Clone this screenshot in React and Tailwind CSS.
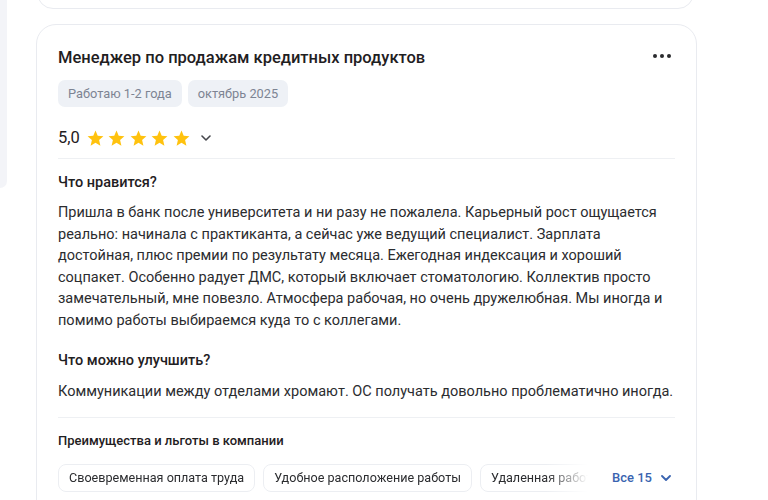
import React from "react";

const benefits = [
  "Своевременная оплата труда",
  "Удобное расположение работы",
  "Удаленная работа",
];

const StarIcon = () => (
  <svg viewBox="0 0 24 24" className="h-[19px] w-[19px]" fill="#ffc20e">
    <path d="M12 17.27L18.18 21l-1.64-7.03L22 9.24l-7.19-.61L12 2 9.19 8.63 2 9.24l5.46 4.73L5.82 21z" />
  </svg>
);

const App = () => {
  return (
    <div className="flex h-[500px] items-start overflow-hidden bg-white font-['Roboto','Liberation_Sans',sans-serif] text-[#222325]">
      {/* left column edge */}
      <div className="w-[7px] shrink-0">
        <div className="h-[188px] rounded-br-[14px] bg-[#f3f4f8]" />
      </div>

      <div className="ml-[29px] w-[661px] shrink-0">
        {/* previous card, mostly scrolled away */}
        <div className="mt-[-31px] ml-px h-[40px] w-[657px] rounded-[16px] border border-[#e9ebf0]" />

        <div className="mt-[15px] rounded-[20px] border border-[#e9ebf0] px-[21px] pt-[21px]">
          <div className="flex items-center justify-between">
            <h2 className="text-[16.5px] leading-6 font-medium text-[#1f2022]">
              Менеджер по продажам кредитных продуктов
            </h2>
            <svg viewBox="0 0 18 4" className="mr-[4px] mt-[-4px] h-[4px] w-[18px]" fill="#2a2b2e">
              <circle cx="2" cy="2" r="2" />
              <circle cx="9" cy="2" r="2" />
              <circle cx="16" cy="2" r="2" />
            </svg>
          </div>

          <div className="mt-[10px] flex gap-[6px]">
            <span className="rounded-[7px] bg-[#eef1f6] px-[10px] py-[5px] text-[12.8px] leading-[17px] text-[#7d8493]">
              Работаю 1-2 года
            </span>
            <span className="rounded-[7px] bg-[#eef1f6] px-[10px] py-[5px] text-[12.8px] leading-[17px] text-[#7d8493]">
              октябрь 2025
            </span>
          </div>

          <div className="mt-[19px] flex h-6 items-center">
            <span className="text-[16.5px] leading-6 text-[#1f2022]">5,0</span>
            <div className="ml-[6px] flex gap-[2.5px]">
              <StarIcon />
              <StarIcon />
              <StarIcon />
              <StarIcon />
              <StarIcon />
            </div>
            <svg viewBox="0 0 10 6" className="ml-[10px] h-[6px] w-[10px]" fill="none" stroke="#45474c" strokeWidth="1.6" strokeLinecap="round" strokeLinejoin="round">
              <path d="M1 1l4 4 4-4" />
            </svg>
          </div>

          <div className="mt-[8px] h-px bg-[#eef0f3]" />

          <h3 className="mt-[14px] text-[14.5px] leading-5 font-medium text-[#1f2022]">Что нравится?</h3>
          <p className="mt-[9px] text-[14.5px] leading-[21.6px] text-[#2b2c2f]">
            Пришла в банк после университета и ни разу не пожалела. Карьерный рост ощущается
            реально: начинала с практиканта, а сейчас уже ведущий специалист. Зарплата
            достойная, плюс премии по результату месяца. Ежегодная индексация и хороший
            соцпакет. Особенно радует ДМС, который включает стоматологию. Коллектив просто
            замечательный, мне повезло. Атмосфера рабочая, но очень дружелюбная. Мы иногда и
            помимо работы выбираемся куда то с коллегами.
          </p>

          <h3 className="mt-[19px] text-[14.5px] leading-5 font-medium text-[#1f2022]">Что можно улучшить?</h3>
          <p className="mt-[10px] text-[14.5px] leading-[22px] text-[#2b2c2f]">
            Коммуникации между отделами хромают. ОС получать довольно проблематично иногда.
          </p>

          <div className="mt-[14px] h-px bg-[#eef0f3]" />

          <h4 className="mt-[13px] text-[13px] leading-5 font-medium text-[#1f2022]">
            Преимущества и льготы в компании
          </h4>

          <div className="mt-[13px] flex items-center">
            <div className="flex w-[530px] gap-[8px] overflow-hidden [mask-image:linear-gradient(to_right,black_92%,transparent_100%)]">
              {benefits.map((b) => (
                <span
                  key={b}
                  className="shrink-0 rounded-[8px] border border-[#eceef2] bg-white px-[10px] py-[5px] text-[12.6px] leading-[16px] whitespace-nowrap text-[#2b2c2f]"
                >
                  {b}
                </span>
              ))}
            </div>
            <button className="ml-auto mr-[4px] flex items-center gap-[9px] text-[13px] font-medium text-[#3a64b0]">
              Все 15
              <svg viewBox="0 0 10 6" className="h-[6px] w-[10px]" fill="none" stroke="#3a64b0" strokeWidth="1.8" strokeLinecap="round" strokeLinejoin="round">
                <path d="M1 1l4 4 4-4" />
              </svg>
            </button>
          </div>
          <div className="h-[40px]" />
        </div>
      </div>
    </div>
  );
};

export default App;
